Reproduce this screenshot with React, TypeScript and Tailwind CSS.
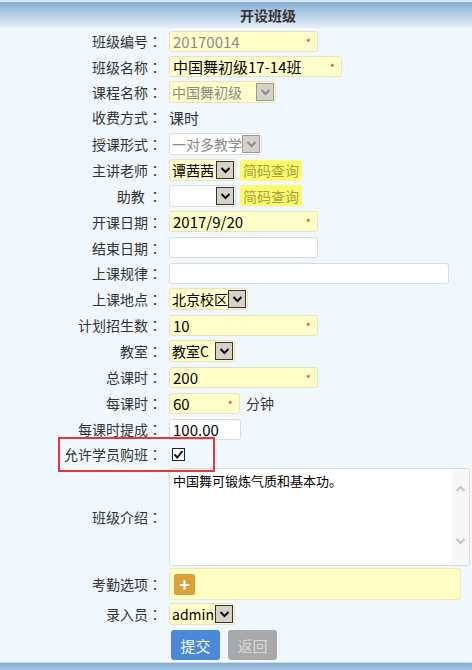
import React from 'react'

function Row({ label, h, children }: { label: string; h: string; children?: React.ReactNode }) {
  return (
    <div className={`flex items-center ${h}`}>
      <div className="w-[162px] shrink-0 flex justify-end text-[14px] leading-none text-[#333] whitespace-pre">
        <span>{label}</span>
        <span className="w-[14px] text-center font-['Noto_Sans_CJK_TC',sans-serif]">：</span>
      </div>
      <div className="pl-[7px] flex items-center">{children}</div>
    </div>
  )
}

function Field({ w, value, yellow, req, gray }: { w: string; value?: string; yellow?: boolean; req?: boolean; gray?: boolean }) {
  return (
    <div
      className={`${w} h-[21px] flex items-center justify-between pl-[3px] pr-[6px] rounded-[3px] border ${
        yellow ? 'bg-[#ffffc9] border-[#e6e2c2]' : 'bg-white border-[#dcdcdc]'
      }`}
    >
      <span className={`text-[15px] leading-none ${gray ? 'text-[#8a8a8a]' : 'text-black'}`}>{value}</span>
      {req && <span className="text-[11px] leading-none text-[#e8302c] mt-[2px]">*</span>}
    </div>
  )
}

function Chevron({ color, dir = 'down' }: { color: string; dir?: 'down' | 'up' }) {
  return (
    <svg width="11" height="8" viewBox="0 0 11 8">
      <path
        d={dir === 'down' ? 'M1.5 2 L5.5 6 L9.5 2' : 'M1.5 6 L5.5 2 L9.5 6'}
        fill="none"
        stroke={color}
        strokeWidth="2"
        strokeLinejoin="miter"
      />
    </svg>
  )
}

function Sel({ w, value, yellow, disabled }: { w: string; value?: string; yellow?: boolean; disabled?: boolean }) {
  return (
    <div
      className={`${w} h-[22px] flex items-center rounded-[3px] border ${
        yellow ? 'bg-[#ffffc9] border-[#e6e2c2]' : 'bg-white border-[#dcdcdc]'
      }`}
    >
      <span className={`flex-1 min-w-0 pl-[2px] text-[14px] leading-[18px] whitespace-nowrap ${disabled ? 'text-[#8a8a8a]' : 'text-black'}`}>
        {value}
      </span>
      <div
        className={`relative w-[18px] h-[18px] mr-px shrink-0 flex items-center justify-center border bg-[#d6d2ca] ${
          disabled ? 'border-[#9a9a9a]' : 'border-[#333]'
        }`}
      >
        <Chevron color={disabled ? '#8c8c8c' : '#111'} />
      </div>
    </div>
  )
}

function Lookup() {
  return (
    <div className="ml-[4px] h-[21px] px-[3px] flex items-center rounded-[3px] bg-[#fbfb72] text-[14px] leading-none text-[#a7a23a]">
      简码查询
    </div>
  )
}

export default function App() {
  return (
    <div className="w-[472px] h-[670px] bg-[#f0f8fe] font-['Noto_Sans_CJK_SC','Noto_Sans',sans-serif] overflow-hidden flex flex-col">
      <div className="h-[28px] shrink-0 border-t-2 border-[#d8e7f3] bg-gradient-to-b from-[#86afd3] to-[#e6eff7] flex items-center pl-[64px]">
        <div className="flex-1 text-center text-[14px] font-bold text-[#333] leading-none">开设班级</div>
      </div>

      <div className="flex-1 flex flex-col">
        <Row label="班级编号" h="h-[26px]">
          <Field w="w-[149px]" value="20170014" yellow req gray />
        </Row>
        <Row label="班级名称" h="h-[25px]">
          <Field w="w-[173px]" value="中国舞初级17-14班" yellow req />
        </Row>
        <Row label="课程名称" h="h-[25px]">
          <Sel w="w-[107px]" value="中国舞初级" yellow disabled />
        </Row>
        <Row label="收费方式" h="h-[26px]">
          <span className="text-[15px] leading-none text-[#333]">课时</span>
        </Row>
        <Row label="授课形式" h="h-[27px]">
          <Sel w="w-[93px]" value="一对多教学" disabled />
        </Row>
        <Row label="主讲老师" h="h-[26px]">
          <Sel w="w-[67px]" value="谭茜茜" yellow />
          <Lookup />
        </Row>
        <Row label="助教 " h="h-[25px]">
          <Sel w="w-[67px]" />
          <Lookup />
        </Row>
        <Row label="开课日期" h="h-[27px]">
          <Field w="w-[149px]" value="2017/9/20" yellow req />
        </Row>
        <Row label="结束日期" h="h-[25px]">
          <Field w="w-[149px]" />
        </Row>
        <Row label="上课规律" h="h-[26px]">
          <Field w="w-[280px]" />
        </Row>
        <Row label="上课地点" h="h-[26px]">
          <Sel w="w-[79px]" value="北京校区" yellow />
        </Row>
        <Row label="计划招生数" h="h-[26px]">
          <Field w="w-[149px]" value="10" yellow req />
        </Row>
        <Row label="教室" h="h-[26px]">
          <Sel w="w-[66px]" value="教室C" yellow />
        </Row>
        <Row label="总课时" h="h-[26px]">
          <Field w="w-[149px]" value="200" yellow req />
        </Row>
        <Row label="每课时" h="h-[26px]">
          <Field w="w-[71px]" value="60" yellow req />
          <span className="ml-[6px] text-[14px] leading-none text-[#333]">分钟</span>
        </Row>
        <Row label="每课时提成" h="h-[26px]">
          <Field w="w-[72px]" value="100.00" />
        </Row>

        <div className="relative">
          <Row label="允许学员购班" h="h-[24px]">
            <div className="ml-[3px] w-[13px] h-[13px] border border-[#222] bg-white flex items-center justify-center">
              <svg width="11" height="11" viewBox="0 0 11 11">
                <path d="M1.5 5.5 L4.3 8.5 L9.5 2" fill="none" stroke="#111" strokeWidth="2" />
              </svg>
            </div>
          </Row>
          <div className="absolute left-[58px] top-[-5px] w-[157px] h-[35px] border-2 border-[#e8373b] pointer-events-none" />
        </div>

        <Row label="班级介绍" h="h-[102px]">
          <div className="w-[301px] h-[98px] bg-white border border-[#dcdcdc] rounded-[3px] flex">
            <div className="flex-1 pl-[3px] pt-[3px] text-[13px] leading-[18px] text-black">中国舞可锻炼气质和基本功。</div>
            <div className="w-[17px] bg-[#f7f7f7] flex flex-col items-center justify-between pt-[16px] pb-[20px]">
              <Chevron color="#c4c4c4" dir="up" />
              <Chevron color="#c4c4c4" />
            </div>
          </div>
        </Row>

        <Row label="考勤选项" h="h-[32px]">
          <div className="w-[292px] h-[32px] bg-[#ffffc6] border border-[#eeeab0] rounded-[3px] flex items-center pl-[4px]">
            <div className="w-[21px] h-[21px] rounded-[2px] bg-[#dba23b] flex items-center justify-center text-white text-[18px] font-bold leading-none">
              +
            </div>
          </div>
        </Row>

        <Row label="录入员" h="h-[27px]">
          <Sel w="w-[66px]" value="admin" yellow />
        </Row>

        <div className="flex pl-[171px] pt-[3px] gap-[8px]">
          <div className="w-[49px] h-[30px] rounded-[3px] bg-[#4a89d8] text-white text-[15px] flex items-center justify-center leading-none">
            提交
          </div>
          <div className="w-[49px] h-[30px] rounded-[3px] bg-[#a9a9a9] text-[#d9d9d9] text-[15px] flex items-center justify-center leading-none">
            返回
          </div>
        </div>
      </div>

      <div className="h-[8px] shrink-0 border-t border-[#cfe0ef] bg-gradient-to-b from-[#7ea9d3] to-[#a9c6e3]" />
    </div>
  )
}
